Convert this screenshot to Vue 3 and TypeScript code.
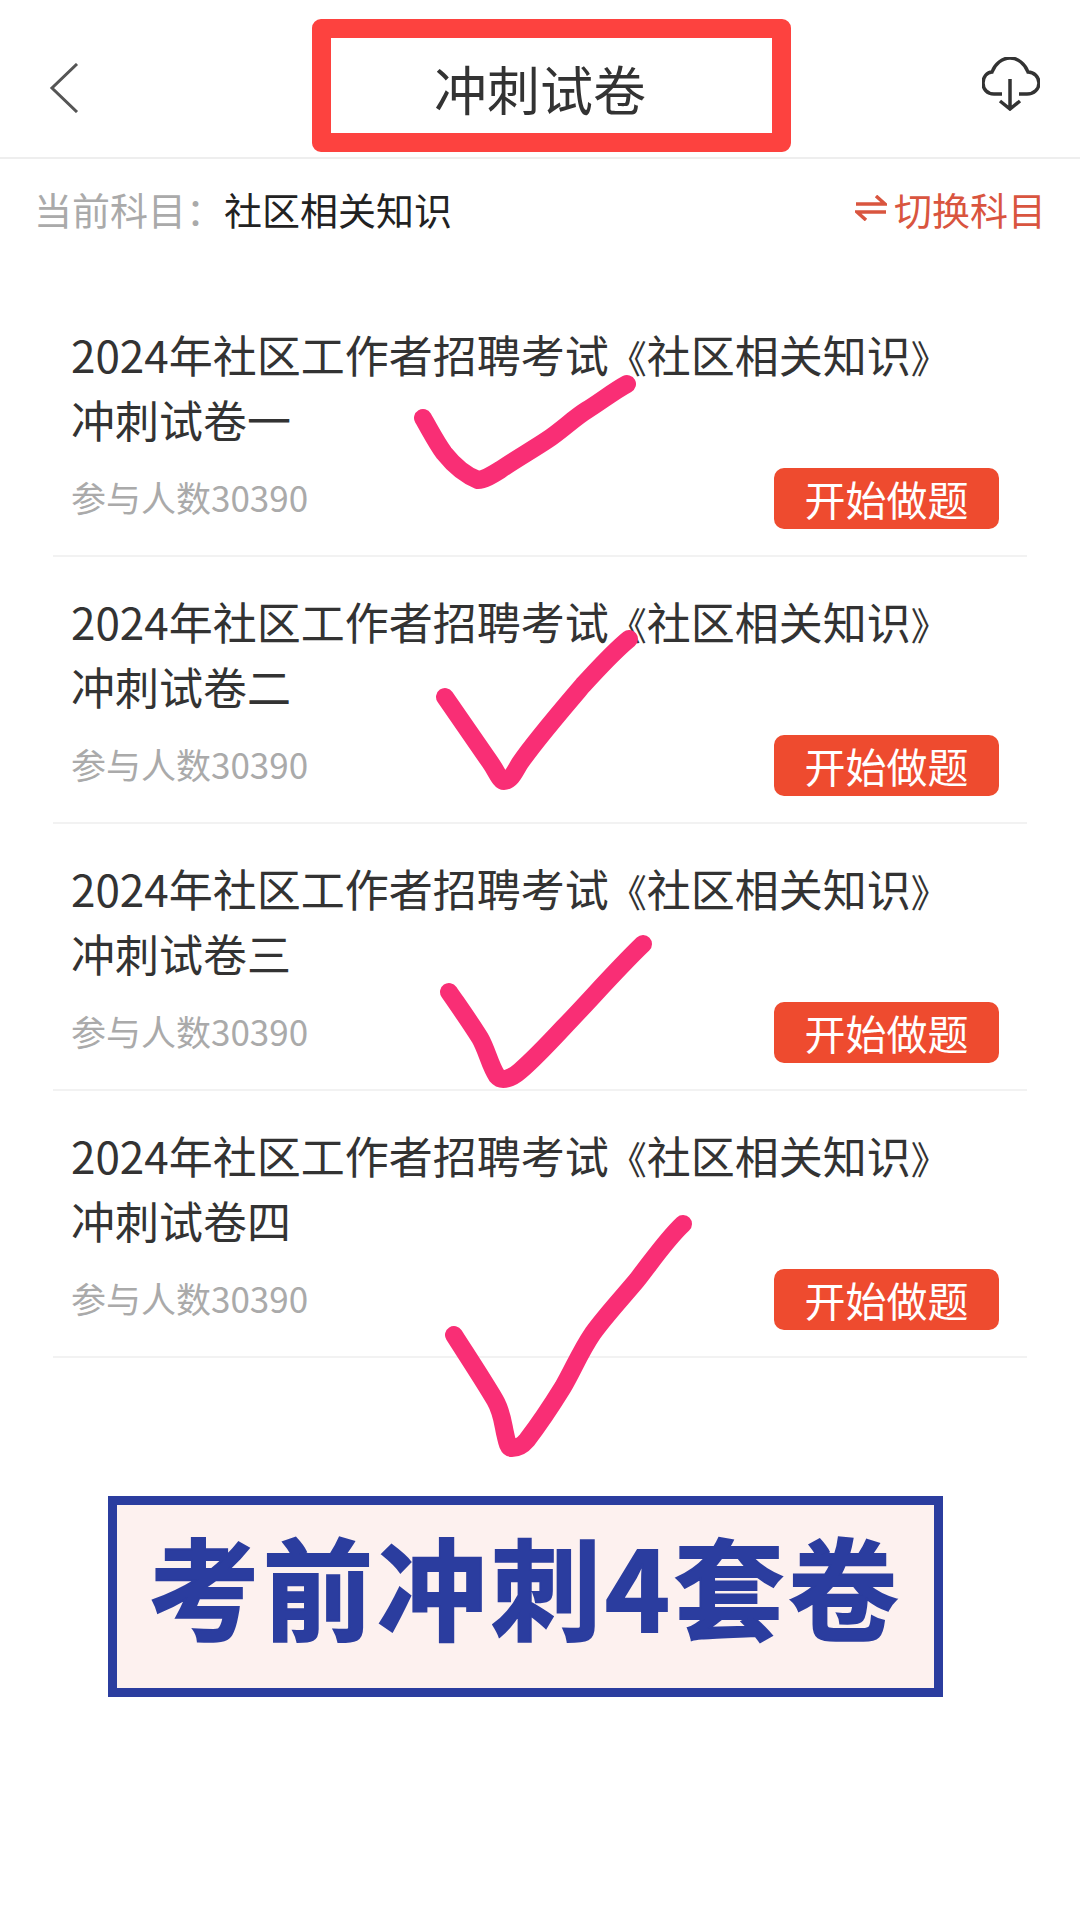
<script setup lang="ts">
const papers = ['一', '二', '三', '四'].map((n) => ({
  year: '2024年社区工作者招聘考试',
  book: '社区相关知识',
  sub: `冲刺试卷${n}`,
  count: 30390,
}));

// hand drawn ticks on top of the list, in page coordinates
const ticks = [
  'M423 418 C430 430 436 442 444 453 C452 463 465 475 478 480 C484 480 492 475 500 470 C516 459 532 450 547 440 C562 430 574 418 587 410 C600 402 614 391 627 384',
  'M445 697 L490 762 C497 772 500 781 504 781 C511 781 515 771 520 763 C535 741 560 712 583 685 C597 670 613 652 629 639',
  'M449 992 C460 1008 470 1022 480 1038 C487 1050 490 1066 497 1076 C502 1082 512 1078 520 1071 C535 1058 549 1043 563 1028 C590 1000 616 970 643 944',
  'M454 1335 C468 1357 482 1378 495 1400 C502 1412 503 1424 505 1433 C507 1442 508 1448 512 1448 C518 1448 522 1446 527 1440 C540 1423 550 1408 563 1387 C573 1370 580 1352 593 1333 C606 1315 622 1298 637 1280 C652 1261 666 1240 683 1224',
];
</script>

<template>
  <div class="page">
    <header class="nav">
      <svg class="back" viewBox="0 0 30 50" width="30" height="50">
        <path d="M28 1 L3 25 L28 49" fill="none" stroke="#555" stroke-width="3" />
      </svg>
      <h1 class="title">冲刺试卷</h1>
      <svg class="cloud" viewBox="0 0 58 54" width="58" height="54">
        <path
          d="M20 37 H12 C5 37 1 32 1 26 C1 20 5 15 10 15 C13 7 20 1 28 1 C36 1 43 7 46 15 C52 15 57 20 57 26 C57 32 52 37 45 37 H37"
          fill="none"
          stroke="#333"
          stroke-width="3.5"
        />
        <path d="M28 22 V52 M18 44 L28 52 L38 44" fill="none" stroke="#333" stroke-width="3.5" />
      </svg>
    </header>

    <div class="subject">
      <span class="subject-label">当前科目：</span>
      <span class="subject-name">社区相关知识</span>
      <span class="switch">
        <svg viewBox="0 0 32 26" width="32" height="26">
          <path d="M1 9 H30 L21 1 M31 17 H2 L11 25" fill="none" stroke="#d9553f" stroke-width="3.5" />
        </svg>
        切换科目
      </span>
    </div>

    <ul class="list">
      <li v-for="p in papers" :key="p.sub" class="row">
        <div class="row-title">
          {{ p.year }}<span class="bracket">《</span>{{ p.book }}<span class="bracket">》</span><br />{{ p.sub }}
        </div>
        <div class="row-foot">
          <span class="count">参与人数{{ p.count }}</span>
          <button class="start">开始做题</button>
        </div>
      </li>
    </ul>

    <div class="banner">考前冲刺4套卷</div>

    <svg class="ticks" viewBox="0 0 1080 1920" width="1080" height="1920">
      <path
        v-for="(d, i) in ticks"
        :key="i"
        :d="d"
        fill="none"
        stroke="#f92e75"
        stroke-width="18"
        stroke-linecap="round"
        stroke-linejoin="round"
      />
    </svg>
  </div>
</template>

<style>
body {
  background: #fff;
}
</style>

<style scoped>
.page {
  position: relative;
  width: 1080px;
  height: 1920px;
  overflow: hidden;
  background: #fff;
  font-family: "Noto Sans CJK SC", "Noto Sans", sans-serif;
}

.nav {
  display: flex;
  align-items: center;
  box-sizing: border-box;
  height: 159px;
  padding: 19px 40px 6px 49px;
  border-bottom: 2px solid #eee;
}

.back {
  margin-top: 5px;
}

.cloud {
  margin-top: -2px;
  margin-left: auto;
}

.title {
  box-sizing: border-box;
  width: 479px;
  height: 133px;
  margin: 0 0 0 233px;
  padding-right: 23px;
  border: 19px solid #fd423f;
  border-radius: 9px;
  color: #333;
  font-size: 53px;
  font-weight: 400;
  line-height: 100px;
  text-align: center;
}

.subject {
  display: flex;
  align-items: center;
  height: 98px;
  padding: 0 34px 6px 34px;
  font-size: 38px;
}

.subject-label {
  flex-shrink: 0;
  width: 190px;
  color: #aaa;
  white-space: nowrap;
}

.subject-name {
  color: #222;
}

.switch {
  display: flex;
  align-items: center;
  gap: 7px;
  margin-left: auto;
  color: #d9553f;
}

.list {
  margin: 27px 53px 0;
  padding: 0;
  list-style: none;
}

.row {
  box-sizing: border-box;
  height: 267px;
  padding: 32px 18px 0;
  border-bottom: 2px solid #f2f2f2;
}

.row-title {
  color: #333;
  font-size: 44px;
  line-height: 65px;
  white-space: nowrap;
}

.bracket {
  font-size: 38px;
  line-height: 0;
}

.row-foot {
  display: flex;
  align-items: center;
  justify-content: space-between;
  margin-top: 16px;
  padding-right: 10px;
}

.count {
  margin-top: -4px;
  color: #aaa;
  font-size: 35px;
}

.start {
  width: 225px;
  height: 61px;
  padding: 0 0 3px;
  border: 0;
  border-radius: 10px;
  background: #ee4b2f;
  color: #fff;
  font-family: inherit;
  font-size: 41px;
}

.banner {
  box-sizing: border-box;
  width: 835px;
  height: 201px;
  margin: 138px 0 0 108px;
  border: 9px solid #2b3d9f;
  background: #fdf1ef;
  color: #2b3d9f;
  font-size: 110px;
  font-weight: 700;
  letter-spacing: 4px;
  line-height: 158px;
  text-align: center;
  white-space: nowrap;
  -webkit-text-stroke: 2px #2b3d9f;
}

.ticks {
  position: absolute;
  top: 0;
  left: 0;
  pointer-events: none;
}
</style>
